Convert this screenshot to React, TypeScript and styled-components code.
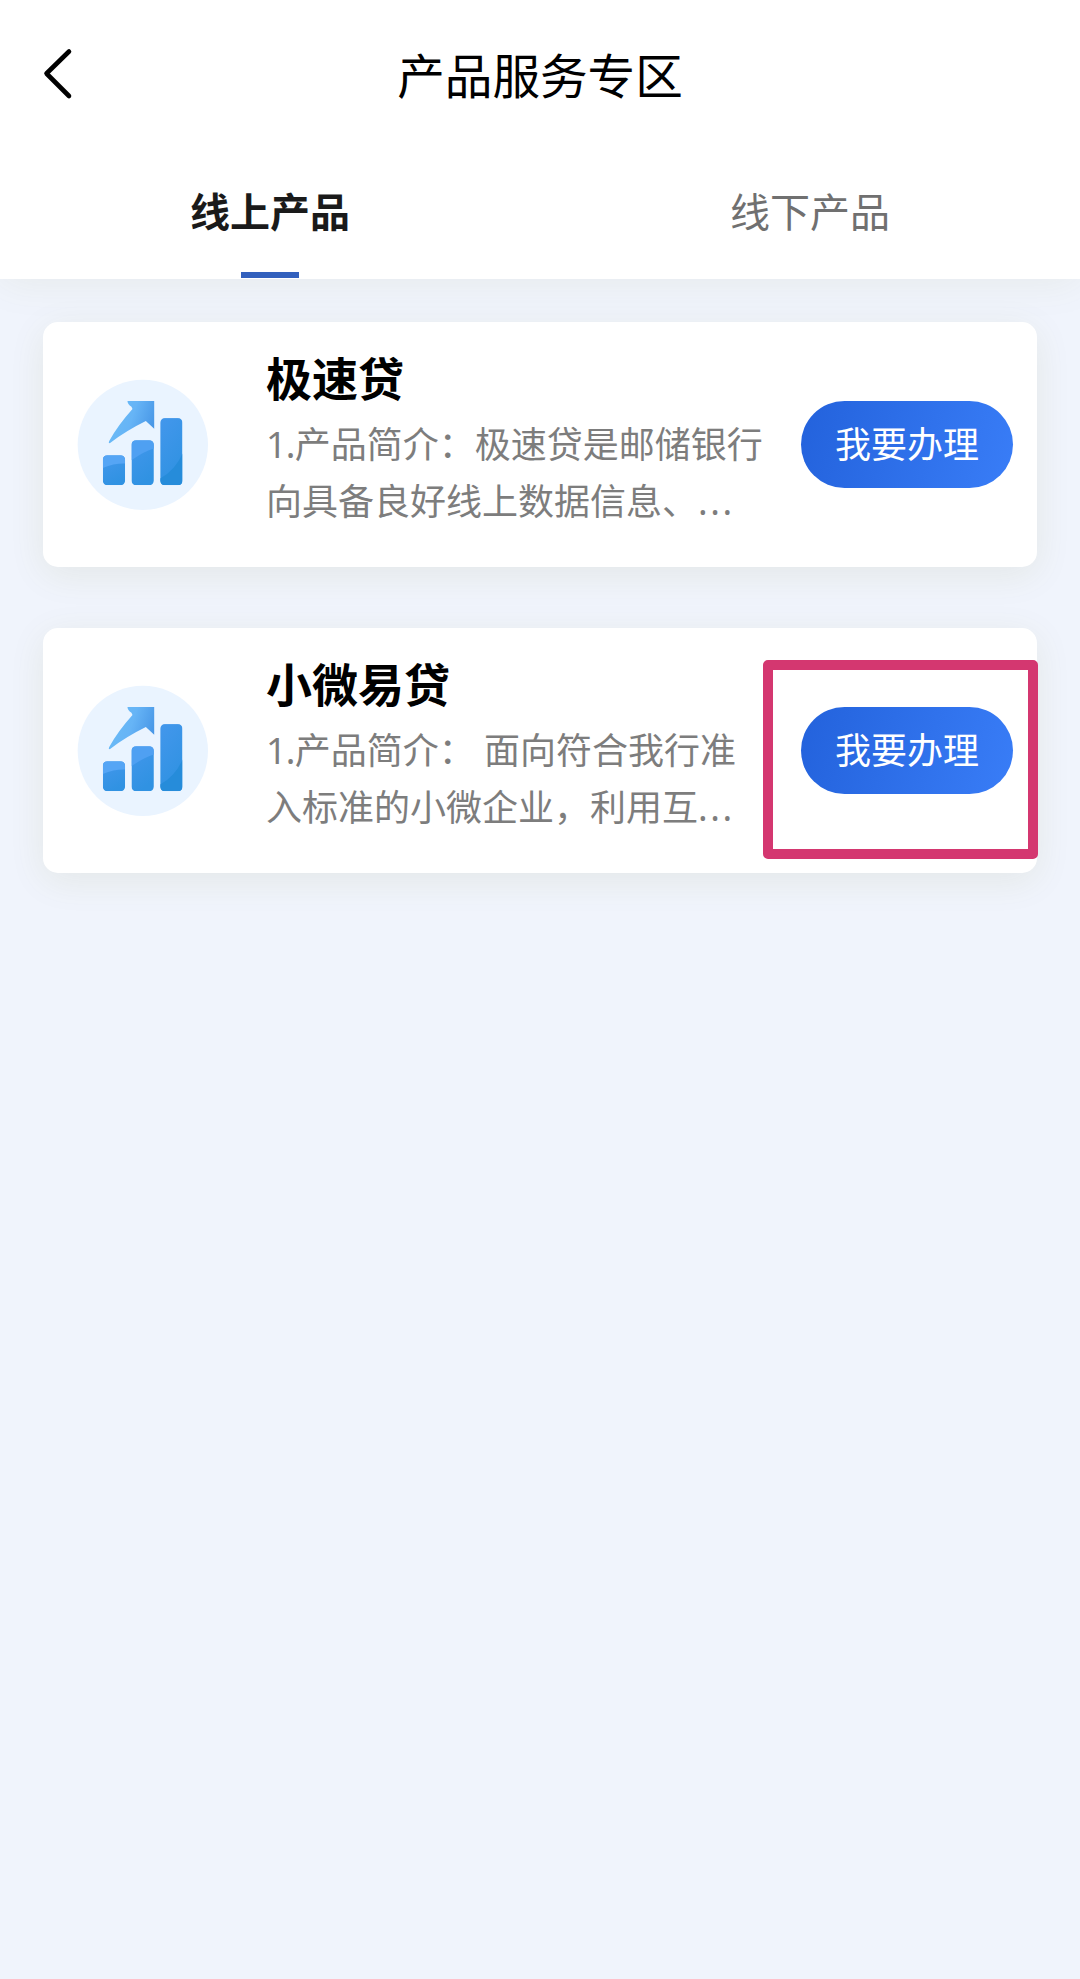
import React from 'react';
import styled, { createGlobalStyle } from 'styled-components';

const GlobalStyle = createGlobalStyle`
  * { box-sizing: border-box; }
  body {
    margin: 0;
    background: #f0f4fc;
    font-family: "Noto Sans", "Noto Sans CJK SC", sans-serif;
  }
`;

const Page = styled.div`
  width: 1080px;
  min-height: 1979px;
  display: flex;
  flex-direction: column;
  background: #f0f4fc;
`;

const Header = styled.header`
  height: 279px;
  display: flex;
  flex-direction: column;
  background: #fff;
  box-shadow: 0 2px 40px rgba(110, 110, 20, 0.08);
`;

const NavBar = styled.div`
  height: 150px;
  padding: 0 40px;
  display: grid;
  grid-template-columns: 100px 1fr 100px;
  align-items: center;
`;

const BackButton = styled.button`
  display: flex;
  padding: 0;
  border: 0;
  background: none;
`;

const PageTitle = styled.h1`
  margin: 0;
  padding-top: 1px;
  text-align: center;
  font-size: 47.6px;
  font-weight: 400;
  line-height: 60px;
  color: #000;
`;

const Tabs = styled.nav`
  flex: 1;
  display: grid;
  grid-template-columns: 1fr 1fr;
`;

const Tab = styled.button<{ $active?: boolean }>`
  display: flex;
  flex-direction: column;
  align-items: center;
  justify-content: space-between;
  padding: 36px 0 1px;
  border: 0;
  background: none;
  font: ${(p) => (p.$active ? 700 : 400)} 40px/52px "Noto Sans", "Noto Sans CJK SC", sans-serif;
  color: ${(p) => (p.$active ? '#1a1a1a' : '#707070')};
`;

const TabLine = styled.span`
  width: 58px;
  height: 6px;
  background: #3260bd;
`;

const ProductList = styled.main`
  display: flex;
  flex-direction: column;
  gap: 61px;
  padding: 43px 43px 0;
`;

const Card = styled.article`
  position: relative;
  height: 245px;
  display: flex;
  align-items: center;
  padding: 0 24px 0 34px;
  border-radius: 15px;
  background: #fff;
  box-shadow: 0 8px 36px rgba(110, 110, 20, 0.09);
`;

const CardText = styled.div`
  flex: 1;
  align-self: stretch;
  margin-left: 58px;
  padding-top: 26px;
`;

const CardTitle = styled.h2`
  margin: 0 0 8px;
  font-size: 46px;
  font-weight: 700;
  line-height: 60px;
  color: #000;
`;

const Summary = styled.p`
  margin: 0;
  font-size: 36px;
  line-height: 57px;
  color: #7d7d7d;
  white-space: pre;
`;

const Ordinal = styled.span`
  letter-spacing: -0.8px;
`;

const Dots = styled.span`
  letter-spacing: 2.6px;
`;

const ApplyButton = styled.button`
  width: 212px;
  height: 87px;
  padding: 0;
  border: 0;
  border-radius: 44px;
  background: linear-gradient(105deg, #2362dc, #397df7);
  font: 400 36px/48px "Noto Sans", "Noto Sans CJK SC", sans-serif;
  color: #fff;
`;

const Highlight = styled.div`
  position: absolute;
  left: 720px;
  top: 32px;
  width: 275px;
  height: 199px;
  border: 10px solid #d43770;
  border-radius: 5px;
  pointer-events: none;
`;

function GrowthIcon() {
  return (
    <svg width="131" height="131" viewBox="51 57 392 392">
      <defs>
        <linearGradient id="arrow" x1="0" y1="0.3" x2="1" y2="0.6">
          <stop offset="0" stopColor="#6bbcf6" />
          <stop offset="0.5" stopColor="#66b4f6" />
          <stop offset="1" stopColor="#4796e6" />
        </linearGradient>
        <linearGradient id="bar" x1="0" y1="0" x2="0.4" y2="1">
          <stop offset="0" stopColor="#4397ec" />
          <stop offset="1" stopColor="#3092e2" />
        </linearGradient>
        <clipPath id="bars">
          <rect x="128" y="285" width="67" height="90" rx="14" />
          <rect x="214" y="240" width="67" height="135" rx="14" />
          <rect x="300" y="174" width="67" height="201" rx="14" />
        </clipPath>
      </defs>
      <circle cx="248" cy="254" r="195" fill="#eaf4ff" />
      <path d="M202 123H282V206L257 183Q200 211 149 249Q144 249 147 243Q174 195 217 147L214 140Q202 133 202 123Z" fill="url(#arrow)" />
      <g clipPath="url(#bars)">
        <rect x="128" y="285" width="67" height="90" fill="url(#bar)" />
        <rect x="214" y="240" width="67" height="135" fill="url(#bar)" />
        <rect x="300" y="174" width="67" height="201" fill="url(#bar)" />
        <path d="M128 285H195V310Q163 309 128 323Z" fill="#55a5f5" />
        <path d="M214 240H281V265Q253 273 214 300Z" fill="#4fa0f2" />
        <path d="M367 280V375H300V355Q345 330 367 280Z" fill="#268cda" />
      </g>
    </svg>
  );
}

const products = [
  {
    name: '极速贷',
    first: '产品简介\uFF1A极速贷是邮储银行',
    second: '向具备良好线上数据信息、',
    highlighted: false,
  },
  {
    name: '小微易贷',
    first: '产品简介\uFF1A 面向符合我行准',
    second: '入标准的小微企业\uFF0C利用互',
    highlighted: true,
  },
];

export default function App() {
  return (
    <Page lang="zh-CN">
      <GlobalStyle />
      <Header>
        <NavBar>
          <BackButton aria-label="返回">
            <svg width="36" height="56" viewBox="0 0 36 56" fill="none">
              <path d="M29 4.5L6.5 26.5L29 49" stroke="#000" strokeWidth="4.6" strokeLinecap="round" strokeLinejoin="round" />
            </svg>
          </BackButton>
          <PageTitle>产品服务专区</PageTitle>
        </NavBar>
        <Tabs>
          <Tab $active>
            线上产品
            <TabLine />
          </Tab>
          <Tab>线下产品</Tab>
        </Tabs>
      </Header>
      <ProductList>
        {products.map((product) => (
          <Card key={product.name}>
            <GrowthIcon />
            <CardText>
              <CardTitle>{product.name}</CardTitle>
              <Summary>
                <Ordinal>1.</Ordinal>
                {product.first}
                <br />
                {product.second}
                <Dots>...</Dots>
              </Summary>
            </CardText>
            <ApplyButton>我要办理</ApplyButton>
            {product.highlighted && <Highlight />}
          </Card>
        ))}
      </ProductList>
    </Page>
  );
}
